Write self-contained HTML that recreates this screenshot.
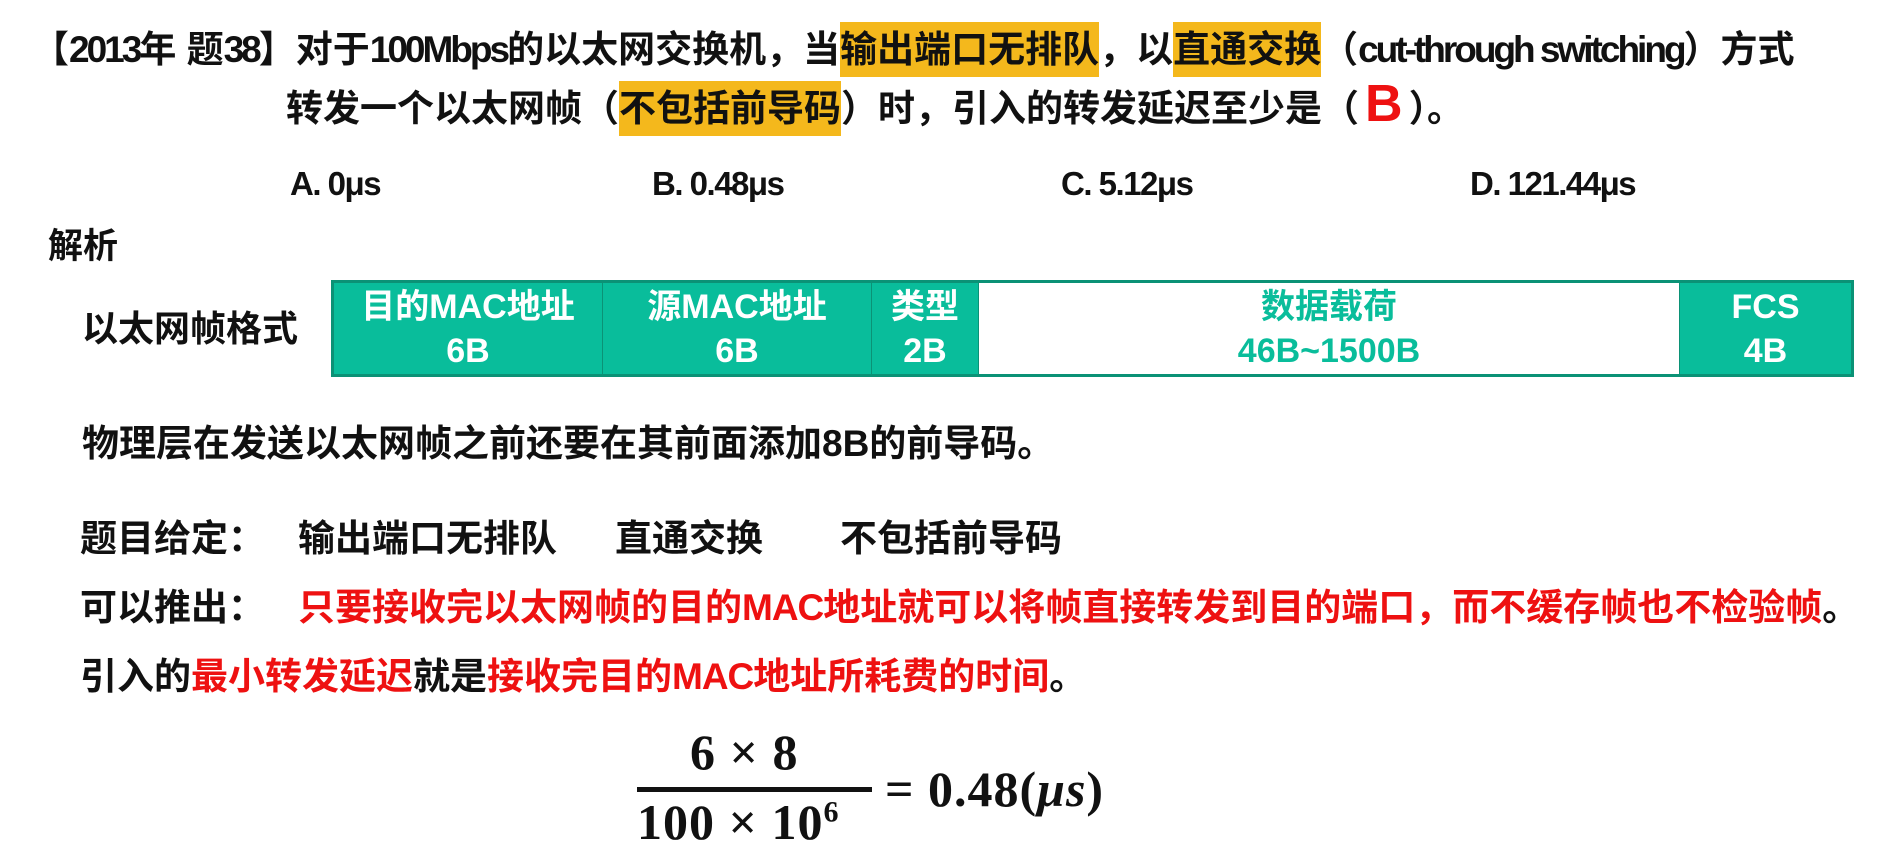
<!DOCTYPE html>
<html><head><meta charset="utf-8"><style>
body{margin:0;width:1887px;height:838px;background:#fff;position:relative;overflow:hidden;font-family:"Liberation Sans","Noto Sans CJK SC",sans-serif;font-weight:bold;color:#111}
.t{position:absolute;white-space:nowrap;font-size:37px;line-height:1}
.n{letter-spacing:-3px}
.hl{background:#F4B81C}
.r{color:#EE1111}
table{position:absolute;left:331px;top:280px;width:1523px;height:97px;border-collapse:collapse;border:3px solid #0B9276}
td{background:#09BD9B;color:#fff;text-align:center;font-size:34px;line-height:44px;border:1px solid #0B9276;padding:0}
td.w{background:#fff;color:#09BD9B}
.m{font-family:"Liberation Serif","DejaVu Serif",serif;font-size:50px;font-weight:bold;position:absolute;white-space:nowrap;line-height:1;letter-spacing:1px}
</style></head><body>
<div class="t" style="left:32px;top:31px">【<span class="n">2013</span>年 题<span class="n">38</span>】对于<span class="n">100Mbps</span>的以太网交换机，当<span class="hl" style="padding:7px 0">输出端口无排队</span>，以<span class="hl" style="padding:7px 0">直通交换</span>（<span class="n">cut-through switching</span>）方式</div>
<div class="t" style="left:286px;top:78px">转发一个以太网帧（<span class="hl" style="padding:7px 0">不包括前导码</span>）时，引入的转发延迟至少是（<span class="r" style="font-size:52px;margin:0 6px">B</span>）。</div>
<div class="t n" style="left:290px;top:167px;font-size:33px;letter-spacing:-1.5px">A. 0μs</div>
<div class="t n" style="left:652px;top:167px;font-size:33px;letter-spacing:-1.5px">B. 0.48μs</div>
<div class="t n" style="left:1061px;top:167px;font-size:33px;letter-spacing:-1.5px">C. 5.12μs</div>
<div class="t n" style="left:1470px;top:167px;font-size:33px;letter-spacing:-1.5px">D. 121.44μs</div>
<div class="t" style="left:48px;top:229px;font-size:35px">解析</div>
<div class="t" style="left:82px;top:311px;font-size:36px">以太网帧格式</div>
<table><tr>
<td style="width:268px">目的MAC地址<br>6B</td>
<td style="width:268px">源MAC地址<br>6B</td>
<td style="width:106px">类型<br>2B</td>
<td class="w" style="width:700px">数据载荷<br>46B~1500B</td>
<td>FCS<br>4B</td>
</tr></table>
<div class="t" style="left:82px;top:425px">物理层在发送以太网帧之前还要在其前面添加8B的前导码。</div>
<div class="t" style="left:80px;top:520px">题目给定：</div>
<div class="t" style="left:298px;top:520px">输出端口无排队</div>
<div class="t" style="left:615px;top:520px">直通交换</div>
<div class="t" style="left:840px;top:520px">不包括前导码</div>
<div class="t" style="left:80px;top:589px">可以推出：</div>
<div class="t r" style="left:298px;top:589px">只要接收完以太网帧的目的<span class="n" style="letter-spacing:-1px">MAC</span>地址就可以将帧直接转发到目的端口，而不缓存帧也不检验帧<span style="color:#111">。</span></div>
<div class="t" style="left:80px;top:658px">引入的<span class="r">最小转发延迟</span>就是<span class="r">接收完目的<span style="letter-spacing:-1px">MAC</span>地址所耗费的时间</span>。</div>
<div class="m" style="left:690px;top:727px">6 × 8</div>
<div style="position:absolute;left:637px;top:787px;width:235px;height:5px;background:#111"></div>
<div class="m" style="left:637px;top:797px">100 × 10<sup style="font-size:30px">6</sup></div>
<div class="m" style="left:885px;top:764px">= 0.48(<i>μs</i>)</div>
</body></html>
